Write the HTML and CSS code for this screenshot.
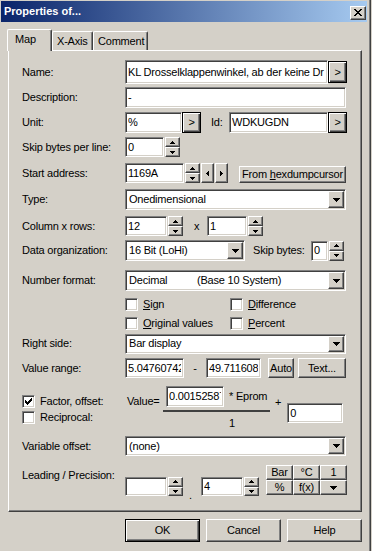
FILE: index.html
```html
<!DOCTYPE html>
<html lang="en">
<head>
  <meta charset="UTF-8" />
  <title>Properties of...</title>
  <link rel="stylesheet" href="styles.css">
</head>
<body>
  <svg class="defs" aria-hidden="true">
    <symbol id="up" viewBox="0 0 5 3"><path d="M2 0h1v1h1v1h1v1H0V2h1V1h1z"/></symbol>
    <symbol id="dn" viewBox="0 0 5 3"><path d="M0 0h5v1H4v1H3v1H2V2H1V1H0z"/></symbol>
    <symbol id="lt" viewBox="0 0 3 5"><path d="M2 0h1v5H2V4H1V3H0V2h1V1h1z"/></symbol>
    <symbol id="rt" viewBox="0 0 3 5"><path d="M0 0h1v1h1v1h1v1H2v1H1v1H0z"/></symbol>
    <symbol id="drop" viewBox="0 0 7 4"><path d="M0 0h7v1H6v1H5v1H4v1H3V3H2V2H1V1H0z"/></symbol>
    <symbol id="chk" viewBox="0 0 7 7"><path d="M6 0h1v1H6zM5 1h2v1H5zM0 2h1v1H0zM4 2h3v1H4zM0 3h2v1H0zM3 3h3v1H3zM0 4h5v1H0zM1 5h3v1H1zM2 6h1v1H2z"/></symbol>
    <symbol id="x" viewBox="0 0 8 7"><path d="M0 0h2v1H0zM6 0h2v1H6zM1 1h2v1H1zM5 1h2v1H5zM2 2h4v1H2zM3 3h2v1H3zM2 4h4v1H2zM1 5h2v1H1zM5 5h2v1H5zM0 6h2v1H0zM6 6h2v1H6z"/></symbol>
  </svg>

  <div class="window">
    <div class="titlebar">
      <span class="title">Properties of...</span>
      <span class="btn close"><svg class="i-x"><use href="#x"/></svg></span>
    </div>

    <div class="content">
      <div class="tabs">
        <div class="tab tab-map">Map</div>
        <div class="tab tab-x">X-Axis</div>
        <div class="tab tab-c">Comment</div>
      </div>

      <div class="panel">
        <div class="row r-name">
          <span class="lbl">Name:</span>
          <div class="field w-name"><span>KL Drosselklappenwinkel, ab der keine Dr</span></div>
          <div class="btn def go go-name">&gt;</div>
        </div>

        <div class="row r-desc">
          <span class="lbl">Description:</span>
          <div class="field w-full h21"><span>-</span></div>
        </div>

        <div class="row r-unit">
          <span class="lbl">Unit:</span>
          <div class="field w-unit h21"><span>%</span></div>
          <div class="btn def go">&gt;</div>
          <span class="id-lbl">Id:</span>
          <div class="field w-id h21"><span>WDKUGDN</span></div>
          <div class="btn def go">&gt;</div>
        </div>

        <div class="row r-skip">
          <span class="lbl">Skip bytes per line:</span>
          <div class="field w-skip"><span>0</span></div>
          <div class="spin">
            <span class="btn"><svg class="i-ud"><use href="#up"/></svg></span>
            <span class="btn"><svg class="i-ud"><use href="#dn"/></svg></span>
          </div>
        </div>

        <div class="row r-start">
          <span class="lbl">Start address:</span>
          <div class="field w-start"><span>1169A</span></div>
          <div class="spin">
            <span class="btn"><svg class="i-ud"><use href="#up"/></svg></span>
            <span class="btn"><svg class="i-ud"><use href="#dn"/></svg></span>
          </div>
          <span class="btn step"><svg class="i-lr"><use href="#lt"/></svg></span>
          <span class="btn step"><svg class="i-lr"><use href="#rt"/></svg></span>
          <span class="btn hexdump"><span>From <u>h</u>exdumpcursor</span></span>
        </div>

        <div class="row r-type">
          <span class="lbl">Type:</span>
          <div class="select w-full h21"><span>Onedimensional</span><i class="btn drop"><svg class="i-drop"><use href="#drop"/></svg></i></div>
        </div>

        <div class="row r-col">
          <span class="lbl">Column x rows:</span>
          <div class="field w-col1"><span>12</span></div>
          <div class="spin">
            <span class="btn"><svg class="i-ud"><use href="#up"/></svg></span>
            <span class="btn"><svg class="i-ud"><use href="#dn"/></svg></span>
          </div>
          <span class="xsep">x</span>
          <div class="field w-col2"><span>1</span></div>
          <div class="spin">
            <span class="btn"><svg class="i-ud"><use href="#up"/></svg></span>
            <span class="btn"><svg class="i-ud"><use href="#dn"/></svg></span>
          </div>
        </div>

        <div class="row r-data">
          <span class="lbl">Data organization:</span>
          <div class="select w-data h21"><span>16 Bit (LoHi)</span><i class="btn drop"><svg class="i-drop"><use href="#drop"/></svg></i></div>
          <span class="skip-lbl">Skip bytes:</span>
          <div class="field w-skip2"><span>0</span></div>
          <div class="spin">
            <span class="btn"><svg class="i-ud"><use href="#up"/></svg></span>
            <span class="btn"><svg class="i-ud"><use href="#dn"/></svg></span>
          </div>
        </div>

        <div class="row r-num">
          <span class="lbl">Number format:</span>
          <div class="select w-full h21"><span><span class="nf-a">Decimal</span>(Base 10 System)</span><i class="btn drop"><svg class="i-drop"><use href="#drop"/></svg></i></div>
        </div>

        <div class="row r-chk1">
          <span class="lbl"></span>
          <div class="chk chk-a"><span class="cb"></span><span><u>S</u>ign</span></div>
          <div class="chk"><span class="cb"></span><span><u>D</u>ifference</span></div>
        </div>

        <div class="row r-chk2">
          <span class="lbl"></span>
          <div class="chk chk-a"><span class="cb"></span><span><u>O</u>riginal values</span></div>
          <div class="chk"><span class="cb"></span><span><u>P</u>ercent</span></div>
        </div>

        <div class="row r-right">
          <span class="lbl">Right side:</span>
          <div class="select w-full"><span>Bar display</span><i class="btn drop"><svg class="i-drop"><use href="#drop"/></svg></i></div>
        </div>

        <div class="row r-range">
          <span class="lbl">Value range:</span>
          <div class="field w-start"><span>5.04760742</span></div>
          <span class="dash">-</span>
          <div class="field w-max"><span>49.711608</span></div>
          <span class="btn auto">Auto</span>
          <span class="btn text-btn">Text...</span>
        </div>

        <div class="row r-factor">
          <div class="chk-col">
            <div class="chk"><span class="cb"><svg class="i-chk"><use href="#chk"/></svg></span><span>Factor, offset:</span></div>
            <div class="chk"><span class="cb"></span><span>Reciprocal:</span></div>
          </div>
          <span class="val-eq">Value=</span>
          <div class="frac">
            <div class="numer">
              <div class="field w-fac h21"><span>0.00152587</span></div>
              <span class="eprom">* Eprom</span>
            </div>
            <div class="frac-line"></div>
            <div class="denom">1</div>
          </div>
          <span class="plus">+</span>
          <div class="field w-off"><span>0</span></div>
        </div>

        <div class="row r-var">
          <span class="lbl">Variable offset:</span>
          <div class="select w-full"><span>(none)</span><i class="btn drop"><svg class="i-drop"><use href="#drop"/></svg></i></div>
        </div>

        <div class="row r-lead">
          <span class="lbl lead-lbl">Leading / Precision:</span>
          <div class="lead-ud">
            <div class="field w-col1"><span></span></div>
            <div class="spin">
              <span class="btn"><svg class="i-ud"><use href="#up"/></svg></span>
              <span class="btn"><svg class="i-ud"><use href="#dn"/></svg></span>
            </div>
          </div>
          <span class="dot">.</span>
          <div class="lead-ud">
            <div class="field w-lead2"><span>4</span></div>
            <div class="spin">
              <span class="btn"><svg class="i-ud"><use href="#up"/></svg></span>
              <span class="btn"><svg class="i-ud"><use href="#dn"/></svg></span>
            </div>
          </div>
          <div class="unit-grid">
            <span class="btn">Bar</span>
            <span class="btn">°C</span>
            <span class="btn">1</span>
            <span class="btn">%</span>
            <span class="btn">f(x)</span>
            <span class="btn"><svg class="i-drop"><use href="#drop"/></svg></span>
          </div>
        </div>
      </div>

      <div class="dlg-buttons">
        <span class="btn def dlg-btn">OK</span>
        <span class="btn dlg-btn">Cancel</span>
        <span class="btn dlg-btn">Help</span>
      </div>
    </div>
  </div>
</body>
</html>
```

FILE: styles.css
```css
* {
  box-sizing: border-box;
}

html, body {
  margin: 0;
  padding: 0;
}

body {
  width: 372px;
  height: 551px;
  overflow: hidden;
  background: #d4d0c8;
  font-family: "Liberation Sans", Arial, sans-serif;
  font-size: 11px;
  line-height: 13px;
  letter-spacing: -0.2px;
  color: #000;
}

.defs {
  display: block;
  width: 0;
  height: 0;
  overflow: hidden;
}

svg {
  display: block;
  fill: #000;
}

.window {
  width: 372px;
  height: 551px;
  padding: 1px;
  box-shadow: inset -1px 0 #d4d0c8, inset -2px 0 #404040, inset -3px 0 #808080;
}

/* title bar */
.titlebar {
  display: flex;
  align-items: center;
  justify-content: space-between;
  width: 366px;
  height: 21px;
  padding: 0 1px 0 3px;
  background: linear-gradient(to right, #0a246a, #a6caf0);
}

.title {
  color: #fff;
  font-weight: bold;
  letter-spacing: 0;
}

.close {
  width: 16px;
  height: 14px;
  margin-top: 2px;
}

.i-x {
  width: 8px;
  height: 7px;
}

.content {
  padding-left: 7px;
}

/* tabs */
.tabs {
  display: flex;
  align-items: flex-end;
  height: 21px;
  margin-top: 7px;
}

.tab {
  height: 19px;
  padding: 3px 0 0 4px;
  border: 1px solid;
  border-bottom: 0;
  border-color: #fff #404040 #fff #fff;
  box-shadow: inset -1px 0 #808080;
  border-radius: 2px 2px 0 0;
}

.tab-map {
  position: relative;
  z-index: 1;
  width: 45px;
  height: 22px;
  margin: 0 0 -1px -1px;
  padding: 3px 0 0 7px;
  background: #d4d0c8;
}

.tab-x {
  width: 41px;
}

.tab-c {
  width: 55px;
}

.panel {
  width: 354px;
  height: 462px;
  padding: 9px 0 0 13px;
  border: 1px solid;
  border-color: #fff #404040 #404040 #fff;
  box-shadow: inset -1px -1px #808080;
}

/* classic controls */
.btn {
  display: flex;
  align-items: center;
  justify-content: center;
  flex: none;
  background: #d4d0c8;
  border: 1px solid;
  border-color: #fff #404040 #404040 #fff;
  box-shadow: inset -1px -1px #808080;
  font-style: normal;
  white-space: nowrap;
}

.btn.def {
  border-color: #000;
  box-shadow: inset 1px 1px #fff, inset -1px -1px #404040, inset -2px -2px #808080;
}

.field,
.select {
  display: flex;
  align-items: center;
  flex: none;
  height: 20px;
  background: #fff;
  border: 1px solid;
  border-color: #808080 #fff #fff #808080;
  box-shadow: inset 1px 1px #404040, inset -1px -1px #d4d0c8;
}

.field {
  padding: 0 2px;
}

.field > span {
  flex: 1;
  min-width: 0;
  overflow: hidden;
  white-space: nowrap;
}

.select {
  padding: 1px;
}

.select > span {
  flex: 1;
  padding-left: 2px;
  white-space: nowrap;
}

.drop {
  align-self: stretch;
  width: 16px;
}

.i-drop {
  width: 7px;
  height: 4px;
}

.spin {
  display: flex;
  flex-direction: column;
  flex: none;
  width: 15px;
  height: 20px;
  margin-left: 1px;
}

.spin .btn {
  flex: 1;
}

.i-ud {
  width: 5px;
  height: 3px;
}

.i-lr {
  width: 3px;
  height: 5px;
}

.cb {
  display: flex;
  align-items: center;
  justify-content: center;
  flex: none;
  width: 13px;
  height: 13px;
  background: #fff;
  border: 1px solid;
  border-color: #808080 #fff #fff #808080;
  box-shadow: inset 1px 1px #404040, inset -1px -1px #d4d0c8;
}

.i-chk {
  width: 7px;
  height: 7px;
}

.h21 {
  height: 21px;
}

/* rows */
.row {
  display: flex;
  align-items: center;
}

.lbl {
  flex: none;
  width: 103px;
  white-space: nowrap;
}

.r-name { height: 24px; }
.r-desc { height: 21px; margin-top: 3px; }
.r-unit { height: 21px; margin-top: 4px; }
.r-skip { height: 20px; margin-top: 4px; }
.r-start { height: 20px; margin-top: 6px; }
.r-type { height: 21px; margin-top: 6px; }
.r-col { height: 20px; margin-top: 6px; }
.r-data { height: 21px; margin-top: 4px; }
.r-num { height: 21px; margin-top: 9px; }
.r-chk1 { height: 13px; margin-top: 7px; }
.r-chk2 { height: 13px; margin-top: 6px; }
.r-right { height: 21px; margin-top: 3px; }
.r-range { height: 20px; margin-top: 4px; }
.r-factor { height: 47px; margin-top: 7px; align-items: flex-start; }
.r-var { height: 20px; margin-top: 4px; }
.r-lead { height: 31px; margin-top: 9px; align-items: flex-start; }

.w-name { width: 203px; height: 24px; }
.w-full { width: 221px; }
.w-unit { width: 57px; }
.w-id { width: 99px; }
.w-skip { width: 39px; }
.w-start { width: 59px; }
.w-col1 { width: 42px; }
.w-col2 { width: 40px; }
.w-data { width: 120px; }
.w-skip2 { width: 17px; }
.w-max { width: 55px; }
.w-fac { width: 58px; }
.w-off { width: 56px; }
.w-lead2 { width: 42px; }

.go {
  width: 19px;
  height: 21px;
}

.go-name {
  height: 22px;
}

.id-lbl {
  width: 18px;
  margin-left: 10px;
}

.step {
  width: 13px;
  height: 20px;
  margin-left: 1px;
}

.hexdump {
  align-self: flex-end;
  width: 107px;
  height: 17px;
  margin-left: 11px;
}

.xsep {
  width: 13px;
  margin-left: 11px;
}

.skip-lbl {
  width: 58px;
  margin-left: 8px;
  white-space: nowrap;
}

.nf-a {
  display: inline-block;
  width: 68px;
}

.chk {
  display: flex;
  align-items: center;
  gap: 5px;
  height: 13px;
  white-space: nowrap;
}

.chk-a {
  width: 105px;
}

.dash {
  width: 22px;
  text-align: center;
}

.auto {
  width: 26px;
  height: 20px;
  margin-left: 7px;
}

.text-btn {
  width: 48px;
  height: 20px;
  margin-left: 4px;
}

/* factor / offset formula */
.chk-col {
  display: flex;
  flex-direction: column;
  gap: 3px;
  width: 103px;
  padding-top: 10px;
}

.val-eq {
  width: 36px;
  margin: 10px 0 0 2px;
}

.frac {
  width: 107px;
  padding-top: 1px;
}

.numer {
  display: flex;
  align-items: flex-start;
  padding-left: 3px;
}

.eprom {
  margin: 4px 0 0 5px;
}

.frac-line {
  height: 2px;
  margin-top: 3px;
  background: #404040;
}

.denom {
  margin: 5px 0 0 66px;
}

.plus {
  margin: 11px 0 0 5px;
}

.w-off {
  margin: 18px 0 0 6px;
}

/* leading / precision */
.lead-lbl {
  margin-top: 4px;
}

.lead-ud {
  display: flex;
  margin-top: 12px;
}

.lead-ud .field,
.lead-ud .spin {
  height: 19px;
}

.dot {
  width: 18px;
  padding-left: 6px;
  margin-top: 24px;
}

.unit-grid {
  display: grid;
  grid-template-columns: repeat(3, 27px);
  grid-template-rows: repeat(2, 15px);
  margin-left: 7px;
}

/* dialog buttons */
.dlg-buttons {
  display: flex;
  justify-content: flex-end;
  gap: 6px;
  width: 354px;
  margin-top: 7px;
}

.dlg-btn {
  width: 75px;
  height: 23px;
}
```
